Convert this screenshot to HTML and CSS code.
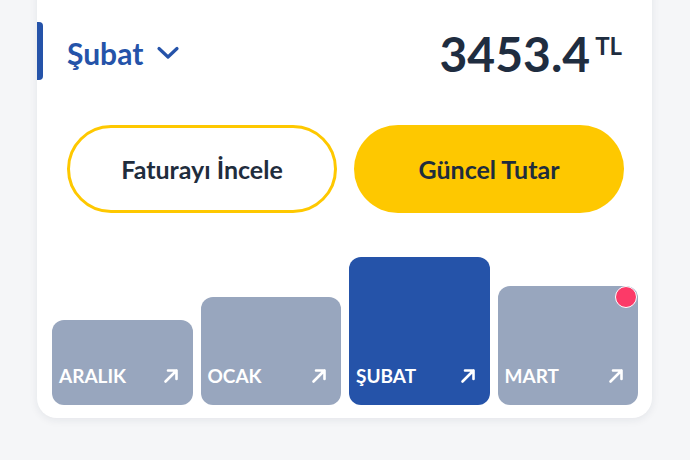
FILE: index.html
```html
<!DOCTYPE html>
<html lang="tr">
<head>
<meta charset="utf-8">
<link rel="stylesheet" href="styles.css">
</head>
<body>
<div class="card">
  <div class="header">
    <span class="accent"></span>
    <div class="month">
      <span class="month-name">Şubat</span>
      <svg class="chev" width="24" height="15" viewBox="0 0 24 15"><path d="M3 3.5 L12 12 L21 3.5" fill="none" stroke="#2553a9" stroke-width="3.2" stroke-linecap="round" stroke-linejoin="round"/></svg>
    </div>
    <div class="amount">3453.4<span class="cur">TL</span></div>
  </div>
  <div class="actions">
    <button class="btn btn-outline">Faturayı İncele</button>
    <button class="btn btn-fill">Güncel Tutar</button>
  </div>
  <div class="bars">
    <div class="bar" style="height:85px"><span>ARALIK</span><svg class="arr" viewBox="0 0 16 16" width="16" height="16"><path d="M2.5 13.5 L13.5 2.5 M5 2.5 H13.5 V11" fill="none" stroke="#fff" stroke-width="2.6" stroke-linecap="round" stroke-linejoin="round"/></svg></div>
    <div class="bar" style="height:108px"><span>OCAK</span><svg class="arr" viewBox="0 0 16 16" width="16" height="16"><path d="M2.5 13.5 L13.5 2.5 M5 2.5 H13.5 V11" fill="none" stroke="#fff" stroke-width="2.6" stroke-linecap="round" stroke-linejoin="round"/></svg></div>
    <div class="bar bar-active" style="height:148px"><span>ŞUBAT</span><svg class="arr" viewBox="0 0 16 16" width="16" height="16"><path d="M2.5 13.5 L13.5 2.5 M5 2.5 H13.5 V11" fill="none" stroke="#fff" stroke-width="2.6" stroke-linecap="round" stroke-linejoin="round"/></svg></div>
    <div class="bar" style="height:119px"><span>MART</span><svg class="arr" viewBox="0 0 16 16" width="16" height="16"><path d="M2.5 13.5 L13.5 2.5 M5 2.5 H13.5 V11" fill="none" stroke="#fff" stroke-width="2.6" stroke-linecap="round" stroke-linejoin="round"/></svg><i class="dot"></i></div>
  </div>
</div>
</body>
</html>
```
FILE: styles.css
```css
html, body { margin: 0; padding: 0; }
body {
  background: #f5f6f8;
  font-family: "Lato", "Noto Sans", sans-serif;
  width: 690px;
  height: 460px;
  overflow: hidden;
}
.card {
  box-sizing: border-box;
  width: 615px;
  margin: -20px 0 0 37px;
  background: #fff;
  border-radius: 0 0 20px 20px;
  box-shadow: 0 2px 8px rgba(30, 40, 70, 0.08);
  padding: 42px 14px 13px 15px;
}
.header {
  display: flex;
  align-items: center;
  height: 58px;
  margin-left: -15px;
}
.accent {
  width: 6px;
  height: 58px;
  background: #2553a9;
  border-radius: 0 4px 4px 0;
}
.month {
  display: flex;
  align-items: center;
  margin-left: 24px;
  margin-top: 3px;
  gap: 13px;
  color: #2553a9;
}
.month-name {
  font-size: 30px;
  font-weight: 700;
  line-height: 1;
}
.amount {
  margin-left: auto;
  margin-right: 16px;
  font-size: 48px;
  font-weight: 700;
  color: #1f2d40;
  line-height: 1;
  display: flex;
  align-items: flex-start;
  margin-top: 6px;
}
.cur {
  font-size: 24px;
  margin-left: 5px;
  margin-top: 4px;
  line-height: 1;
}
.actions {
  display: flex;
  justify-content: space-between;
  margin: 45px 14px 0 15px;
}
.btn {
  flex: none;
  width: 270px;
  margin: 0;
  height: 88px;
  border-radius: 44px;
  font-family: inherit;
  font-size: 25px;
  font-weight: 700;
  color: #1f2d3d;
  box-sizing: border-box;
  padding: 0;
}
.btn-outline {
  background: #fff;
  border: 3px solid #fec800;
}
.btn-fill {
  background: #fec800;
  border: none;
}
.bars {
  display: flex;
  align-items: flex-end;
  gap: 8px;
  height: 148px;
  margin-top: 44px;
}
.bar {
  flex: 1 1 0;
  box-sizing: border-box;
  position: relative;
  background: #98a6be;
  border-radius: 12px;
  display: flex;
  align-items: flex-end;
  justify-content: space-between;
  padding: 0 14px 20px 7px;
  color: #fff;
  font-size: 19px;
  font-weight: 700;
}
.bar span { line-height: 1; }
.bar-active { background: #2553a9; }
.arr { margin-bottom: 1px; }
.dot {
  position: absolute;
  top: 0px;
  right: 1px;
  width: 22px;
  height: 22px;
  border-radius: 50%;
  background: #fc3a68;
  border: 1.5px solid #fff;
  box-sizing: border-box;
}
```
